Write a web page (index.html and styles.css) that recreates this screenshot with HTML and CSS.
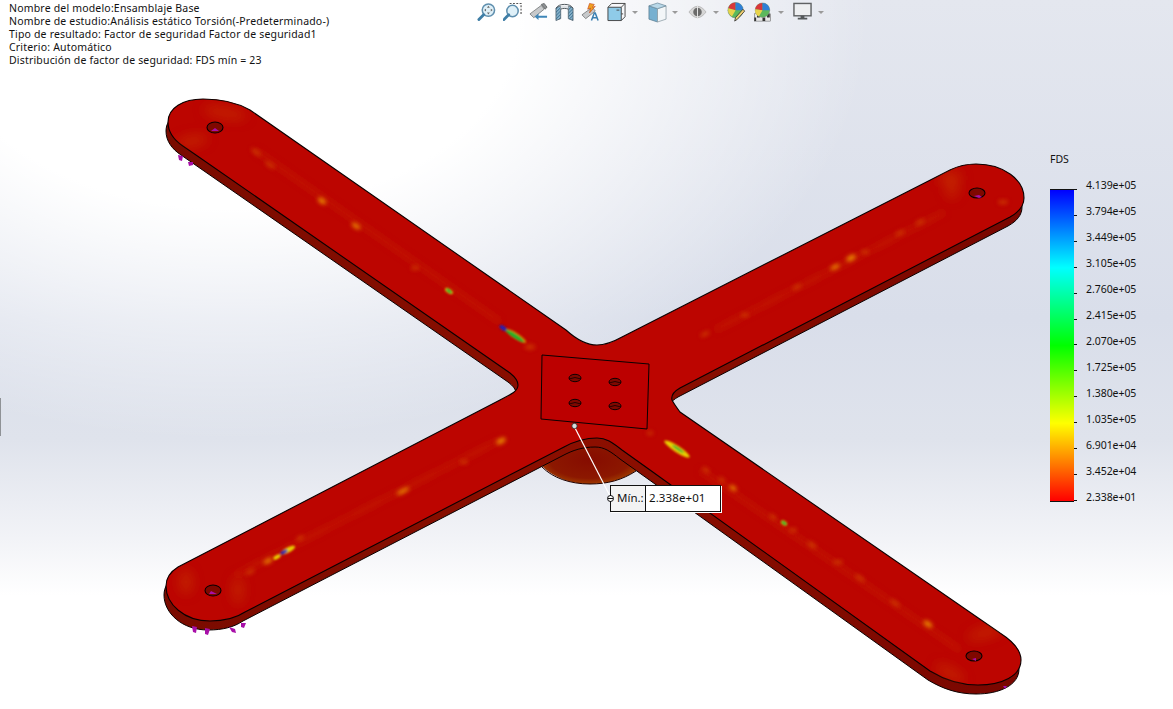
FILE: index.html
```html
<!DOCTYPE html>
<html lang="es">
<head>
<meta charset="utf-8">
<title>Factor de seguridad</title>
<link rel="stylesheet" href="styles.css">
</head>
<body>
<main class="viewport">
  <svg class="model" width="1173" height="709" viewBox="0 0 1173 709">
    <defs>
      <path id="plate" d="M168 122 C168 108 183 99 203 99 C220 99 236 102 250 110 L566 330 C577 340 586 345 597 345 C606 345 613 342 622 337 L950 170 C958 166 966 164 976 164 C1004 164 1024 180 1024 198 C1024 206 1019 212 1010 217 L680 388 C673 392 671 396 672 400 C674 404 677 408 680 412 L1000 633 C1014 642 1021 650 1021 660 C1021 676 1002 685 978 685 C960 685 945 680 930 671 L650 470 L622 450 C612 442 606 438 597 438 C585 438 575 441 564 447 L245 612 C236 618 225 621 210 621 C184 621 166 604 166 586 C166 578 170 572 178 567 L500 400 C512 394 518 391 518 385 C518 380 515 377 510 373 L183 146 C174 140 168 132 168 122 Z"/>
      <linearGradient id="side" x1="0" x2="1" y1="0" y2="0">
        <stop offset="0" stop-color="#7a0b00"/>
        <stop offset=".5" stop-color="#8c0f00"/>
        <stop offset="1" stop-color="#790600"/>
      </linearGradient>
      <radialGradient id="dome" cx=".5" cy=".45" r=".6">
        <stop offset="0" stop-color="#860c00"/>
        <stop offset=".7" stop-color="#8c1800"/>
        <stop offset="1" stop-color="#a64800"/>
      </radialGradient>
      <pattern id="hatch" width="2.500" height="2.500" patternUnits="userSpaceOnUse" patternTransform="rotate(45)">
        <rect width="2.500" height="2.500" fill="#8fb7cf"/>
        <rect width="1" height="2.500" fill="#3f7797"/>
      </pattern>
      <filter id="b2" x="-100%" y="-100%" width="300%" height="300%"><feGaussianBlur stdDeviation="2"/></filter>
      <filter id="b6" x="-100%" y="-100%" width="300%" height="300%"><feGaussianBlur stdDeviation="6"/></filter>
      <filter id="b4" x="-20%" y="-20%" width="140%" height="140%"><feGaussianBlur stdDeviation="3"/></filter>
      <filter id="b1" x="-100%" y="-100%" width="300%" height="300%"><feGaussianBlur stdDeviation="1"/></filter>
      <clipPath id="plateClip"><use href="#plate"/></clipPath>
    </defs>

    <path class="dome" d="M542 466 C560 452 575 440 597 440 C612 440 625 452 637 470 C622 480 608 484 590 484 C570 484 553 477 542 466 Z" fill="url(#dome)"/>
    <path class="dome-line" d="M542 467 C553 478 570 484 590 484 C608 484 622 480 636 471"/>
    <use href="#plate" class="side" x="-2" y="9" fill="url(#side)"/>

    <g class="pins">
      <path d="M178 155l5 1-1 5-3-1zM188 162l5 0 0 3-4 1zM192 626l5 1-1 6-3-1zM205 628l5 1-2 6-3-1zM229 627l6 2 1 4-4-1zM241 623l5 0-2 5-3-1zM1003 686l4 0-2 3z"/>
    </g>

    <use href="#plate" class="top"/>

    <g clip-path="url(#plateClip)">
      <g class="streak" filter="url(#b4)">
        <line x1="255" y1="150" x2="500" y2="322"/>
        <line x1="715" y1="330" x2="945" y2="212"/>
        <line x1="235" y1="575" x2="500" y2="440"/>
        <line x1="700" y1="470" x2="960" y2="650"/>
      </g>
      <g class="heat-o" filter="url(#b6)">
        <ellipse cx="225" cy="113" rx="22" ry="5" transform="rotate(10 225 113)"/>
        <ellipse cx="192" cy="141" rx="16" ry="5" transform="rotate(-10 192 141)"/>
        <ellipse cx="950" cy="178" rx="12" ry="6"/>
        <ellipse cx="952" cy="190" rx="6" ry="8"/>
        <ellipse cx="985" cy="633" rx="18" ry="5" transform="rotate(-15 985 633)"/>
        <ellipse cx="950" cy="673" rx="16" ry="5" transform="rotate(30 950 673)"/>
        <ellipse cx="238" cy="590" rx="5" ry="14"/>
        <ellipse cx="186" cy="582" rx="6" ry="12"/>
      </g>
      <g class="heat-y" filter="url(#b2)">
        <ellipse cx="322" cy="201" rx="4.500" ry="2.500" transform="rotate(35 322 201)"/>
        <ellipse cx="356" cy="226" rx="5" ry="2" transform="rotate(35 356 226)"/>
        <ellipse class="dim" cx="270" cy="165" rx="6" ry="2" transform="rotate(35 270 165)"/>
        <ellipse class="dim" cx="256" cy="152" rx="6" ry="2" transform="rotate(35 256 152)"/>
        <ellipse class="dim" cx="415" cy="268" rx="4" ry="2"/>
        <ellipse class="dim" cx="530" cy="347" rx="5" ry="2.500"/>
        <ellipse class="dim" cx="250" cy="572" rx="5" ry="2" transform="rotate(-28 250 572)"/>
        <ellipse cx="268" cy="561" rx="5" ry="2" transform="rotate(-28 268 561)"/>
        <ellipse cx="300" cy="538" rx="4" ry="1.500" opacity=".5" transform="rotate(-28 300 538)"/>
        <ellipse cx="403" cy="491" rx="7" ry="2" transform="rotate(-28 403 491)"/>
        <ellipse cx="501" cy="441" rx="5" ry="2.500" transform="rotate(-28 501 441)"/>
        <ellipse class="dim" cx="464" cy="462" rx="4" ry="2"/>
        <ellipse cx="851" cy="258" rx="5" ry="2.500" transform="rotate(-28 851 258)"/>
        <ellipse cx="835" cy="267" rx="5" ry="2" transform="rotate(-28 835 267)"/>
        <ellipse class="dim" cx="865" cy="252" rx="4" ry="2"/>
        <ellipse class="dim" cx="797" cy="287" rx="5" ry="2" transform="rotate(-28 797 287)"/>
        <ellipse class="dim" cx="705" cy="334" rx="5" ry="2" transform="rotate(-28 705 334)"/>
        <ellipse class="dim" cx="745" cy="315" rx="4" ry="2"/>
        <ellipse class="dim" cx="900" cy="233" rx="5" ry="2" transform="rotate(-28 900 233)"/>
        <ellipse class="dim" cx="920" cy="222" rx="5" ry="2" transform="rotate(-28 920 222)"/>
        <ellipse class="dim" cx="1003" cy="202" rx="5" ry="2"/>
        <ellipse cx="733" cy="488" rx="4" ry="2" transform="rotate(35 733 488)"/>
        <ellipse class="dim" cx="706" cy="470" rx="4" ry="2" transform="rotate(35 706 470)"/>
        <ellipse class="dim" cx="722" cy="480" rx="4" ry="2" transform="rotate(35 722 480)"/>
        <ellipse class="dim" cx="773" cy="517" rx="4" ry="2" transform="rotate(35 773 517)"/>
        <ellipse class="dim" cx="793" cy="530" rx="4" ry="2"/>
        <ellipse class="dim" cx="812" cy="545" rx="5" ry="2.500" transform="rotate(35 812 545)"/>
        <ellipse class="dim" cx="838" cy="562" rx="5" ry="2"/>
        <ellipse cx="928" cy="624" rx="5" ry="2.500" transform="rotate(35 928 624)"/>
        <ellipse class="dim" cx="895" cy="603" rx="6" ry="2" transform="rotate(35 895 603)"/>
        <ellipse class="dim" cx="860" cy="578" rx="6" ry="2" transform="rotate(35 860 578)"/>
        <ellipse class="dim" cx="650" cy="433" rx="3" ry="2"/>
      </g>
      <g filter="url(#b1)">
        <ellipse class="yellow" cx="677" cy="449" rx="15" ry="3.200" transform="rotate(33 677 449)"/>
        <ellipse class="green" cx="678" cy="449" rx="7" ry="1.300" transform="rotate(33 678 449)"/>
        <ellipse class="yellow" cx="516" cy="336" rx="12" ry="3" opacity=".6" transform="rotate(33 516 336)"/>
        <ellipse class="green" cx="515" cy="336" rx="11" ry="2.200" transform="rotate(33 515 336)"/>
        <ellipse class="blue" cx="503" cy="328" rx="4" ry="2" transform="rotate(33 503 328)"/>
        <ellipse class="yellow" cx="449" cy="291" rx="4.500" ry="2.200" transform="rotate(35 449 291)"/>
        <ellipse class="green" cx="449" cy="291" rx="3.500" ry="1.500" transform="rotate(35 449 291)"/>
        <ellipse class="yellow" cx="784" cy="523" rx="3.500" ry="2.200" transform="rotate(35 784 523)"/>
        <ellipse class="green" cx="784" cy="523" rx="3" ry="1.500" transform="rotate(35 784 523)"/>
        <ellipse class="yellow" cx="288" cy="550" rx="8" ry="2.500" transform="rotate(-28 288 550)"/>
        <ellipse class="yellow" cx="277" cy="557" rx="4" ry="2" transform="rotate(-28 277 557)"/>
        <ellipse class="blue" cx="284" cy="552" rx="4" ry="1.600" transform="rotate(-28 284 552)"/>
      </g>
    </g>

    <g class="holes">
      <ellipse cx="215" cy="127.500" rx="8" ry="5.500"/>
      <ellipse cx="977" cy="193" rx="8" ry="5"/>
      <ellipse cx="213" cy="590.500" rx="8" ry="5.500"/>
      <ellipse cx="974" cy="656" rx="8" ry="5"/>
    </g>
    <g class="pins">
      <path d="M211 131l4-3 4 3zM974 196l5-1 3 2-3 1zM209 594l2-3 6 3zM972 659l4-1 0 3z"/>
    </g>

    <path class="face" d="M542 355 L649 364 L647 429 L541 419 Z"/>
    <g class="bolts">
      <ellipse cx="575" cy="378" rx="6" ry="3.700"/>
      <ellipse cx="615" cy="382" rx="6" ry="3.700"/>
      <ellipse cx="575" cy="403" rx="6" ry="3.700"/>
      <ellipse cx="615" cy="406" rx="6" ry="3.700"/>
      <path d="M569 379q6-3 12 0M609 383q6-3 12 0M569 404q6-3 12 0M609 407q6-3 12 0"/>
    </g>

    <line class="leader" x1="574" y1="426" x2="610" y2="496"/>
    <circle class="anchor" cx="574.500" cy="426" r="2.700"/>
  </svg>

  <div class="scrap"></div>

  <section class="info">
    <p>Nombre del modelo:Ensamblaje Base</p>
    <p>Nombre de estudio:Análisis estático Torsión(-Predeterminado-)</p>
    <p>Tipo de resultado: Factor de seguridad Factor de seguridad1</p>
    <p>Criterio: Automático</p>
    <p>Distribución de factor de seguridad: FDS mín = 23</p>
  </section>

  <nav class="toolbar">
    <svg class="ic" viewBox="0 0 20 20"><circle cx="12" cy="8" r="6.500" class="glass"/><path class="handle" d="M7 13 2 18"/><path class="mini" d="M12 3.500l1.500 2h-3zM12 12.500l1.500-2h-3zM7.500 8l2-1.500v3zM16.500 8l-2-1.500v3z"/></svg>
    <svg class="ic" viewBox="0 0 20 20"><path class="dash" d="M7 1h12v12"/><circle cx="10" cy="9" r="6" class="glass"/><path class="handle" d="M6 13 1 18"/></svg>
    <svg class="ic" viewBox="0 0 20 20"><path class="scope" d="M1 12 13 3l3 4-11 9z"/><path class="scope2" d="M13 2l3-1 3 4-2 2z"/><path class="arrow" d="M19 14H10v-2.500l-4 3.500 4 3.500V16h9z"/></svg>
    <svg class="ic" viewBox="0 0 20 20"><path class="hatch" fill="url(#hatch)" d="M1 6c1-1 3-2 5-2v13l-5 2zM14 4c2 0 4 1 5 2v13l-5-2z"/><path class="sec-back" d="M6 4c2-1 6-1 8 0v3c-2-1-6-1-8 0z"/><path class="frame" d="M1 6c2-3 5-4 9-4s7 1 9 4M6 7c2-1 6-1 8 0"/></svg>
    <svg class="ic" viewBox="0 0 20 20"><path class="scope" d="M1 13 12 5l3 4-10 8z"/><path class="bolt" d="M9 1l5 1-2 3 3-1-6 7 1-5-3 1z"/><path class="letter" d="M11 19l3-8h1l3 8M12.500 16h4"/></svg>
    <svg class="ic" viewBox="0 0 20 20"><path class="box" d="M1 5h14v14H1z"/><path class="boxl" d="M1 5l4-4h14v14l-4 4M15 5l4-4M15 12l2 0M10 8l3 0"/></svg>
    <span class="caret c1"></span>
    <svg class="ic2" viewBox="0 0 20 22"><path class="cube-l" d="M1 4l9 3v14l-9-3z"/><path class="cube-r" d="M10 7l9-3v14l-9 3z"/><path class="cube-t" d="M1 4l9-3 9 3-9 3z"/></svg>
    <span class="caret c2"></span>
    <svg class="ic3" viewBox="0 0 20 16"><path class="eye" d="M1 8c3-4 6-6 9-6s6 2 9 6c-3 4-6 6-9 6s-6-2-9-6z"/><circle class="iris" cx="10" cy="8" r="4.500"/><path class="slash" d="M10 1v14"/></svg>
    <span class="caret c3"></span>
    <svg class="ic" viewBox="0 0 20 22"><circle class="p-g" cx="9" cy="9" r="8.500"/><path class="p-r" d="M9 9V.5A8.500 8.500 0 0 0 1 7z"/><path class="p-b" d="M9 9V.5A8.500 8.500 0 0 1 17.500 9z"/><path class="p-y" d="M9 9l-8-2a8.500 8.500 0 0 0 4 9z"/><path class="pencil" d="M19 10l-8 9-3 2 1-4 8-9z"/></svg>
    <svg class="ic" viewBox="0 0 20 22"><rect class="chk" x="1" y="13" width="18" height="8"/><path class="chk2" d="M4 13h3v4H4zM10 17h3v4h-3zM15 13h3v4h-3zM1 17h2v4H1z"/><circle class="p-g" cx="10" cy="9" r="8"/><path class="p-r" d="M10 9V1a8 8 0 0 0-8 7z"/><path class="p-b" d="M10 9V1a8 8 0 0 1 8 8z"/><path class="p-y" d="M10 9l-8-1a8 8 0 0 0 4 8z"/></svg>
    <span class="caret c4"></span>
    <svg class="ic" viewBox="0 0 20 20"><rect class="mon" x="1" y="1" width="18" height="13"/><path class="stand" d="M8 14h4v2h3v2H5v-2h3z"/></svg>
    <span class="caret c5"></span>
  </nav>

  <aside class="legend">
    <div class="legend-title">FDS</div>
    <div class="scale">
      <div class="bar">
        <i></i><i></i><i></i><i></i><i></i><i></i><i></i><i></i><i></i><i></i><i></i><i></i><i></i>
      </div>
      <ol class="values">
        <li>4.139e+05</li><li>3.794e+05</li><li>3.449e+05</li><li>3.105e+05</li><li>2.760e+05</li><li>2.415e+05</li><li>2.070e+05</li><li>1.725e+05</li><li>1.380e+05</li><li>1.035e+05</li><li>6.901e+04</li><li>3.452e+04</li><li>2.338e+01</li>
      </ol>
    </div>
  </aside>

  <div class="min-label">
    <span class="min-name">Mín.:</span><span class="min-value">2.338e+01</span>
    <span class="min-dot"></span>
  </div>
</main>
</body>
</html>
```
FILE: styles.css
```css
* { box-sizing: border-box; }
html, body { margin: 0; padding: 0; }
body { width: 1173px; height: 709px; overflow: hidden; font-family: "Noto Sans", "Open Sans", sans-serif; color: #111; }

.viewport {
  position: relative;
  width: 1173px;
  height: 709px;
  overflow: hidden;
  background:
    radial-gradient(ellipse 640px 420px at 230px 20px, #fff 0%, #fff 45%, rgba(255,255,255,0) 100%),
    linear-gradient(180deg, #e4e7ef 0%, #d9deea 45%, #dfe3ec 62%, #f2f3f7 76%, #fff 84%, #fff 100%);
}
.model { position: absolute; left: 0; top: 0; display: block; }

.top { fill: #bc0500; stroke: #0a0000; stroke-width: 1.1; }
.side { stroke: #0a0000; stroke-width: 1; }
.dome { stroke: none; }
.dome-line { fill: none; stroke: #200000; stroke-width: 1; }
.pins path { fill: #a80fa8; }
.streak line { stroke: #cc2a00; stroke-width: 5; opacity: .45; }
.heat-o ellipse { fill: #cc4000; opacity: .5; }
.heat-y ellipse { fill: #e98a00; }
.heat-y .dim { fill: #d24a00; opacity: .7; }
.yellow { fill: #e8d000; }
.green { fill: #19b52a; }
.blue { fill: #2222b8; }
.holes ellipse { fill: #7f0800; stroke: #0a0000; stroke-width: 1.1; }
.face { fill: #bc0000; stroke: #0a0000; stroke-width: 1; }
.bolts ellipse { fill: #7f0800; stroke: #100000; stroke-width: 1; }
.bolts path { fill: none; stroke: #100000; stroke-width: .8; }
.leader { stroke: #fff; stroke-width: 1.2; }
.anchor { fill: #d8dde0; stroke: #222; stroke-width: .8; }

.scrap { position: absolute; left: 0; top: 398px; width: 1px; height: 38px; background: #8f9296; }

.info { position: absolute; left: 9px; top: 2px; font-size: 10.5px; line-height: 13px; letter-spacing: .18px; white-space: nowrap; }
.info p { margin: 0; }

.toolbar { position: absolute; left: 477px; top: 2px; display: flex; align-items: center; height: 20px; }
.ic { width: 19px; height: 20px; margin-right: 7px; flex: none; }
.ic2 { width: 19px; height: 21px; margin-right: 6px; flex: none; }
.ic3 { width: 19px; height: 16px; margin-right: 7px; flex: none; }
.caret { width: 0; height: 0; border: 3px solid transparent; border-top: 3px solid #9a9a9a; border-bottom: 0; flex: none; }
.c1 { margin-right: 10px; }
.c2 { margin-right: 10px; }
.c3 { margin-right: 8px; }
.c4 { margin-right: 9px; }
.c1, .c2, .c3, .c4, .c5 { margin-left: -1px; }

.glass { fill: #dff0f8; stroke: #5f8fae; stroke-width: 1.6; }
.handle { stroke: #3f7ea6; stroke-width: 3; stroke-linecap: round; fill: none; }
.mini { fill: #666; }
.dash { fill: none; stroke: #555; stroke-width: 1.2; stroke-dasharray: 2 1.500; }
.scope { fill: #c7c9cb; stroke: #6d7072; stroke-width: .8; }
.scope2 { fill: #8d9093; stroke: #55585a; stroke-width: .8; }
.arrow { fill: #3f86b8; }
.hatch { stroke: #4a5c68; stroke-width: .8; }
.sec-back { fill: #dfe3e6; }
.frame { fill: none; stroke: #4a5257; stroke-width: 1; }
.bolt { fill: #f0a020; stroke: #c03a10; stroke-width: .6; }
.letter { fill: none; stroke: #3a7fb0; stroke-width: 1.6; }
.box { fill: #8fcbe8; stroke: #444; stroke-width: 1; }
.boxl { fill: none; stroke: #444; stroke-width: 1; }
.cube-l { fill: #77b0d0; stroke: #5f7f92; stroke-width: .8; }
.cube-r { fill: #f3f6f8; stroke: #8a9aa4; stroke-width: .8; }
.cube-t { fill: #b9d8e8; stroke: #6f8d9e; stroke-width: .8; }
.eye { fill: #d6d6d6; stroke: #b0b0b0; stroke-width: .8; }
.iris { fill: #6b6b6b; }
.slash { stroke: #e8e8e8; stroke-width: 1; }
.p-g { fill: #5cb85c; stroke: #777; stroke-width: .5; }
.p-r { fill: #d9363a; }
.p-b { fill: #2f7fd6; }
.p-y { fill: #e9d34a; }
.pencil { fill: #f0d070; stroke: #333; stroke-width: .9; }
.chk { fill: #e8e8e8; stroke: #444; stroke-width: .5; }
.chk2 { fill: #333; }
.mon { fill: #eeeff1; stroke: #5f6163; stroke-width: 1.5; }
.stand { fill: #55585a; }

.legend { position: absolute; left: 1050px; top: 153px; font-size: 10.5px; color: #111; }
.legend-title { height: 23px; line-height: 13px; }
.scale { display: flex; height: 350px; }
.bar {
  position: relative;
  width: 24px;
  height: 313px;
  margin-top: 13px;
  background: linear-gradient(180deg, #0000ff 0%, #00ffff 25%, #00ff00 50%, #ffff00 75%, #ff0000 100%);
  border-top: 1px solid #111;
  border-bottom: 1px solid #111;
  display: flex;
  flex-direction: column;
  justify-content: space-between;
}
.bar i { display: block; width: 3px; height: 1px; margin-left: 24px; background: #111; margin-top: -1px; }
.values { list-style: none; margin: 0 0 0 12px; padding: 0; width: 70px; letter-spacing: -.05px; }
.values li { height: 26px; line-height: 18px; white-space: nowrap; }

.min-label {
  position: absolute;
  left: 610px;
  top: 485px;
  width: 111px;
  height: 27px;
  display: flex;
  font-size: 11.5px;
  line-height: 24px;
  border: 1px solid #111;
  background: #fff;
  box-shadow: 1px 1px 0 #fff;
}
.min-name { width: 35px; padding-left: 6px; background: #f3f3f3; border-right: 1px solid #111; border-left: 0; }
.min-value { flex: 1; padding-left: 3px; background: #fff; letter-spacing: .1px; }
.min-dot {
  position: absolute;
  left: -4px;
  top: 9px;
  width: 7px;
  height: 7px;
  border: 1px solid #111;
  border-radius: 50%;
  background: linear-gradient(#fff 0 2px, #111 2px 3px, #fff 3px);
}
```
